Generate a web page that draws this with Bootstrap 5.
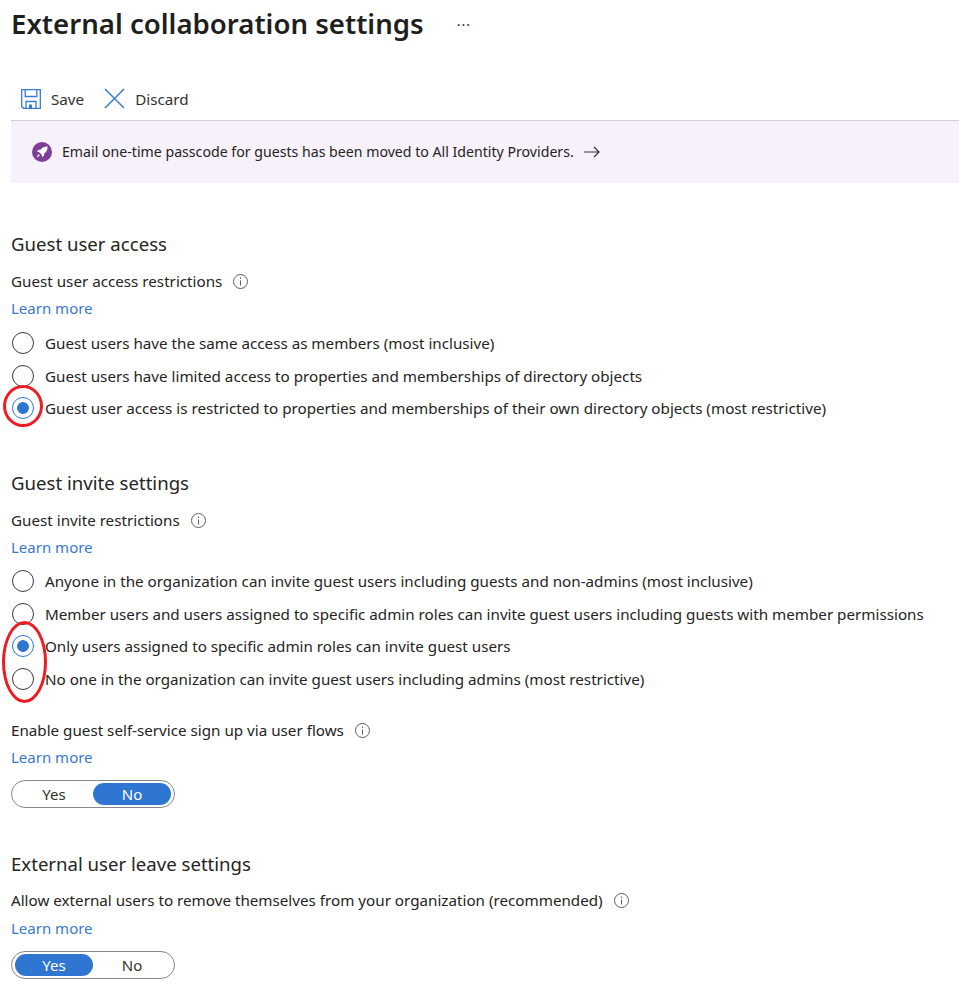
<!DOCTYPE html>
<html lang="en">
<head>
  <meta charset="UTF-8" />
  <meta name="viewport" content="width=device-width, initial-scale=1.0"/>
  <title>External collaboration settings</title>
  <link href="https://cdn.jsdelivr.net/npm/bootstrap@5.3.3/dist/css/bootstrap.min.css" rel="stylesheet">
  <style>
    body {
      background-color: #fff;
      color: #252423;
      font-family: "Noto Sans", "Open Sans", sans-serif;
      font-size: 15.2px;
      line-height: 20px;
      margin: 0;
      overflow-x: hidden;
    }
    .page-wrap { padding-left: 11px; }
    .page-title {
      font-size: 27.6px;
      line-height: 36px;
      font-weight: 600;
      margin: 0;
      color: #201f1e;
    }
    .title-row { padding-top: 4px; height: 42px; }
    .more-dots { margin-left: 33px; font-size: 14px; line-height: 36px; color: #323130; letter-spacing: 1px; padding-top: 3px; }
    .cmd-bar { margin-top: 37px; height: 42px; border-bottom: 1px solid #d2d0ce; padding-left: 10px; padding-bottom: 2px; }
    .cmd-btn { gap: 10px; margin-right: 20px; color: #323130; }
    .notice { height: 62px; background-color: #f7f1fb; padding-left: 21px; gap: 10px; color: #252423; font-size: 14.15px; }
    .sec-title { font-size: 18.6px; line-height: 24px; font-weight: 400; margin: 0; color: #252423; }
    .sec-one { margin-top: 49px; }
    .sec-two { margin-top: 46.6px; }
    .sec-three { margin-top: 44px; }
    .field-label { margin-top: 15px; gap: 11px; height: 20px; }
    .sec-three .field-label { margin-top: 14px; }
    .sec-three .more-link { margin-top: 8px; }
    .more-link { display: block; margin-top: 7px; color: #3a78cf; text-decoration: none; height: 20px; font-size: 15px; }
    .opt-list { margin-top: 9px; }
    .sec-two .opt-list { margin-top: 8px; }
    .opt-row { height: 32.5px; gap: 11px; }
    .radio-dot {
      width: 22px; height: 22px; flex: none; margin-left: 1px;
      border: 1.5px solid #3b3a39; border-radius: 50%;
      background: #fff;
    }
    .radio-dot.is-on {
      border-color: #2f76d2;
      background: radial-gradient(circle, #2f76d2 0 5.5px, #fff 6.2px);
    }
    .toggle-pill {
      width: 164px; height: 28px; padding: 2px 3px;
      border: 1px solid #8a8886; border-radius: 14px;
      margin-top: 13px;
    }
    .toggle-opt { width: 78px; height: 22px; border-radius: 11px; color: #323130; line-height: 22px; text-align: center; font-size: 15px; }
    .toggle-opt.is-on { background-color: #2f76d2; color: #fff; }
    .field-gap { margin-top: 25px; }
    .mark-ring {
      position: absolute;
      border: 3px solid #ee1c25;
      border-radius: 50%;
      pointer-events: none;
    }
    .ring-one { left: -8px; top: 58px; width: 40px; height: 42px; }
    .ring-two { left: -9px; top: 56px; width: 45px; height: 82px; }
    .opt-wrap { position: relative; }
  </style>
</head>
<body>
  <div class="page-wrap">
    <div class="title-row d-flex align-items-center">
      <h1 class="page-title">External collaboration settings</h1>
      <span class="more-dots">···</span>
    </div>

    <div class="cmd-bar d-flex align-items-center">
      <div class="cmd-btn d-flex align-items-center">
        <svg width="20" height="20" viewBox="0 0 20 20" fill="none" stroke="#3a7bd5" stroke-width="1.3">
          <path d="M.7.7h18.6v18.6H2.5L.7 17.5z"/>
          <path d="M4.2.7v6.8h11.6V.7M5 19.3v-6.8h10v6.8"/>
          <path d="M8 19v-3.5h3V19" fill="#3a7bd5" stroke="none"/>
        </svg>
        <span>Save</span>
      </div>
      <div class="cmd-btn d-flex align-items-center">
        <svg width="21" height="21" viewBox="0 0 21 21" fill="none" stroke="#3a7bd5" stroke-width="1.5">
          <path d="M1 1l19 19M20 1L1 20"/>
        </svg>
        <span>Discard</span>
      </div>
    </div>

    <div class="notice d-flex align-items-center">
      <svg width="20" height="20" viewBox="0 0 20 20">
        <circle cx="10" cy="10" r="10" fill="#7f3f98"/>
        <path d="M15.6 4.4c-3-.2-5.2 1-6.9 3.2L6.5 8 4.8 9.8l2.2.3L9.900 13l.3 2.200 1.800-1.700.4-2.200c2.200-1.700 3.400-3.900 3.200-6.900z" fill="#fff"/>
        <path d="M6.300 12.100l1.600 1.600-3.300 1.700z" fill="#fff"/>
      </svg>
      <span>Email one-time passcode for guests has been moved to All Identity Providers.</span>
      <svg width="16" height="12" viewBox="0 0 16 12" fill="none" stroke="#323130" stroke-width="1.200">
        <path d="M0 6h15M10 1l5 5-5 5"/>
      </svg>
    </div>

    <section class="sec-one">
      <h2 class="sec-title">Guest user access</h2>
      <div class="field-label d-flex align-items-center">
        <span>Guest user access restrictions</span>
        <svg width="15" height="15" viewBox="0 0 15 15" fill="none" stroke="#605e5c"><circle cx="7.500" cy="7.500" r="7"/><path d="M7.500 6.500v5M7.500 3.500v1.500"/></svg>
      </div>
      <a class="more-link" href="#">Learn more</a>
      <div class="opt-list opt-wrap">
        <div class="opt-row d-flex align-items-center"><span class="radio-dot"></span><span>Guest users have the same access as members (most inclusive)</span></div>
        <div class="opt-row d-flex align-items-center"><span class="radio-dot"></span><span>Guest users have limited access to properties and memberships of directory objects</span></div>
        <div class="opt-row d-flex align-items-center"><span class="radio-dot is-on"></span><span>Guest user access is restricted to properties and memberships of their own directory objects (most restrictive)</span></div>
        <span class="mark-ring ring-one"></span>
      </div>
    </section>

    <section class="sec-two">
      <h2 class="sec-title">Guest invite settings</h2>
      <div class="field-label d-flex align-items-center">
        <span>Guest invite restrictions</span>
        <svg width="15" height="15" viewBox="0 0 15 15" fill="none" stroke="#605e5c"><circle cx="7.500" cy="7.500" r="7"/><path d="M7.500 6.500v5M7.500 3.500v1.500"/></svg>
      </div>
      <a class="more-link" href="#">Learn more</a>
      <div class="opt-list opt-wrap">
        <div class="opt-row d-flex align-items-center"><span class="radio-dot"></span><span>Anyone in the organization can invite guest users including guests and non-admins (most inclusive)</span></div>
        <div class="opt-row d-flex align-items-center"><span class="radio-dot"></span><span>Member users and users assigned to specific admin roles can invite guest users including guests with member permissions</span></div>
        <div class="opt-row d-flex align-items-center"><span class="radio-dot is-on"></span><span>Only users assigned to specific admin roles can invite guest users</span></div>
        <div class="opt-row d-flex align-items-center"><span class="radio-dot"></span><span>No one in the organization can invite guest users including admins (most restrictive)</span></div>
        <span class="mark-ring ring-two"></span>
      </div>
      <div class="field-label field-gap d-flex align-items-center">
        <span>Enable guest self-service sign up via user flows</span>
        <svg width="15" height="15" viewBox="0 0 15 15" fill="none" stroke="#605e5c"><circle cx="7.500" cy="7.500" r="7"/><path d="M7.500 6.500v5M7.500 3.500v1.500"/></svg>
      </div>
      <a class="more-link" href="#">Learn more</a>
      <div class="toggle-pill d-flex justify-content-between">
        <span class="toggle-opt">Yes</span>
        <span class="toggle-opt is-on">No</span>
      </div>
    </section>

    <section class="sec-three">
      <h2 class="sec-title">External user leave settings</h2>
      <div class="field-label d-flex align-items-center">
        <span>Allow external users to remove themselves from your organization (recommended)</span>
        <svg width="15" height="15" viewBox="0 0 15 15" fill="none" stroke="#605e5c"><circle cx="7.500" cy="7.500" r="7"/><path d="M7.500 6.500v5M7.500 3.500v1.500"/></svg>
      </div>
      <a class="more-link" href="#">Learn more</a>
      <div class="toggle-pill d-flex justify-content-between">
        <span class="toggle-opt is-on">Yes</span>
        <span class="toggle-opt">No</span>
      </div>
    </section>
  </div>
  <script src="https://cdn.jsdelivr.net/npm/bootstrap@5.3.3/dist/js/bootstrap.bundle.min.js"></script>
</body>
</html>
